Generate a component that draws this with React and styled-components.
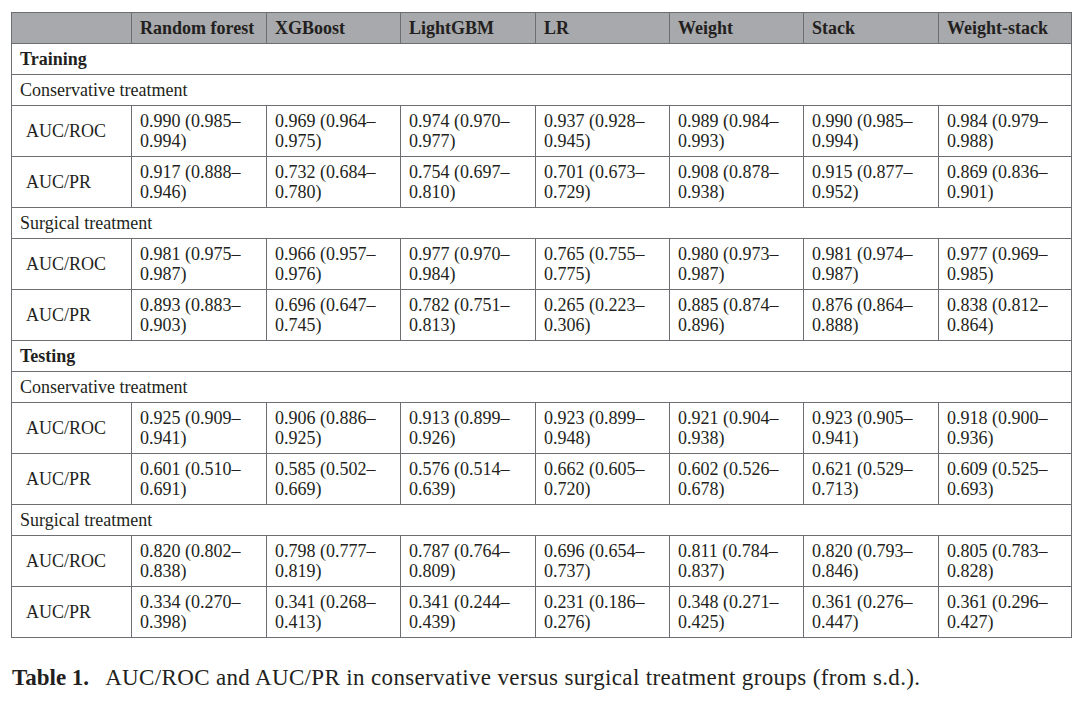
import React from 'react';
import styled, { createGlobalStyle } from 'styled-components';

const GlobalStyle = createGlobalStyle`
  body {
    margin: 0;
    background: #ffffff;
    color: #231f20;
    font-family: "Liberation Serif", "Times New Roman", serif;
  }
`;

const Page = styled.div`
  width: 1080px;
  height: 710px;
  padding: 12px 0 0 11px;
  box-sizing: border-box;
`;

const Table = styled.table`
  width: 1060px;
  border-collapse: collapse;
  table-layout: fixed;
  font-size: 18px;
  line-height: 20px;
`;

const HeadCell = styled.th`
  background: #a7a9ac;
  border: 1px solid #6d6e71;
  height: 30px;
  padding: 0 8px;
  text-align: left;
  font-weight: bold;
  white-space: nowrap;
`;

const SectionCell = styled.td`
  border: 1px solid #6d6e71;
  height: 30px;
  padding: 0 8px;
  font-weight: ${p => (p.$bold ? 'bold' : 'normal')};
`;

const LabelCell = styled.td`
  border: 1px solid #6d6e71;
  height: 50px;
  padding: 0 8px 0 14px;
`;

const ValueCell = styled.td`
  border: 1px solid #6d6e71;
  height: 50px;
  padding: 0 8px;
  vertical-align: middle;
`;

const Caption = styled.p`
  margin: 27px 0 0 1px;
  font-size: 23px;
  line-height: 26px;
  letter-spacing: 0.35px;
`;

const CaptionTitle = styled.span`
  font-weight: bold;
  letter-spacing: 0;
  margin-right: 16px;
`;

const models = ['Random forest', 'XGBoost', 'LightGBM', 'LR', 'Weight', 'Stack', 'Weight-stack'];
const widths = [120, 135, 134, 135, 134, 134, 135, 133];

const sections = [
  {
    title: 'Training',
    groups: [
      {
        name: 'Conservative treatment',
        rows: [
          ['AUC/ROC', ['0.990 (0.985–', '0.994)'], ['0.969 (0.964–', '0.975)'], ['0.974 (0.970–', '0.977)'], ['0.937 (0.928–', '0.945)'], ['0.989 (0.984–', '0.993)'], ['0.990 (0.985–', '0.994)'], ['0.984 (0.979–', '0.988)']],
          ['AUC/PR', ['0.917 (0.888–', '0.946)'], ['0.732 (0.684–', '0.780)'], ['0.754 (0.697–', '0.810)'], ['0.701 (0.673–', '0.729)'], ['0.908 (0.878–', '0.938)'], ['0.915 (0.877–', '0.952)'], ['0.869 (0.836–', '0.901)']],
        ],
      },
      {
        name: 'Surgical treatment',
        rows: [
          ['AUC/ROC', ['0.981 (0.975–', '0.987)'], ['0.966 (0.957–', '0.976)'], ['0.977 (0.970–', '0.984)'], ['0.765 (0.755–', '0.775)'], ['0.980 (0.973–', '0.987)'], ['0.981 (0.974–', '0.987)'], ['0.977 (0.969–', '0.985)']],
          ['AUC/PR', ['0.893 (0.883–', '0.903)'], ['0.696 (0.647–', '0.745)'], ['0.782 (0.751–', '0.813)'], ['0.265 (0.223–', '0.306)'], ['0.885 (0.874–', '0.896)'], ['0.876 (0.864–', '0.888)'], ['0.838 (0.812–', '0.864)']],
        ],
      },
    ],
  },
  {
    title: 'Testing',
    groups: [
      {
        name: 'Conservative treatment',
        rows: [
          ['AUC/ROC', ['0.925 (0.909–', '0.941)'], ['0.906 (0.886–', '0.925)'], ['0.913 (0.899–', '0.926)'], ['0.923 (0.899–', '0.948)'], ['0.921 (0.904–', '0.938)'], ['0.923 (0.905–', '0.941)'], ['0.918 (0.900–', '0.936)']],
          ['AUC/PR', ['0.601 (0.510–', '0.691)'], ['0.585 (0.502–', '0.669)'], ['0.576 (0.514–', '0.639)'], ['0.662 (0.605–', '0.720)'], ['0.602 (0.526–', '0.678)'], ['0.621 (0.529–', '0.713)'], ['0.609 (0.525–', '0.693)']],
        ],
      },
      {
        name: 'Surgical treatment',
        rows: [
          ['AUC/ROC', ['0.820 (0.802–', '0.838)'], ['0.798 (0.777–', '0.819)'], ['0.787 (0.764–', '0.809)'], ['0.696 (0.654–', '0.737)'], ['0.811 (0.784–', '0.837)'], ['0.820 (0.793–', '0.846)'], ['0.805 (0.783–', '0.828)']],
          ['AUC/PR', ['0.334 (0.270–', '0.398)'], ['0.341 (0.268–', '0.413)'], ['0.341 (0.244–', '0.439)'], ['0.231 (0.186–', '0.276)'], ['0.348 (0.271–', '0.425)'], ['0.361 (0.276–', '0.447)'], ['0.361 (0.296–', '0.427)']],
        ],
      },
    ],
  },
];

const App = () => {
  return (
    <Page>
      <GlobalStyle />
      <Table>
        <colgroup>
          {widths.map((w, i) => (<col key={i} style={{ width: w }} />))}
        </colgroup>
        <thead>
          <tr>
            <HeadCell />
            {models.map(m => (<HeadCell key={m}>{m}</HeadCell>))}
          </tr>
        </thead>
        <tbody>
          {sections.map(section => (
            <React.Fragment key={section.title}>
              <tr>
                <SectionCell $bold colSpan={8}>{section.title}</SectionCell>
              </tr>
              {section.groups.map(group => (
                <React.Fragment key={group.name}>
                  <tr>
                    <SectionCell colSpan={8}>{group.name}</SectionCell>
                  </tr>
                  {group.rows.map(([label, ...values]) => (
                    <tr key={label}>
                      <LabelCell>{label}</LabelCell>
                      {values.map((v, i) => (
                        <ValueCell key={i}>{v[0]}<br />{v[1]}</ValueCell>
                      ))}
                    </tr>
                  ))}
                </React.Fragment>
              ))}
            </React.Fragment>
          ))}
        </tbody>
      </Table>
      <Caption>
        <CaptionTitle>Table 1.</CaptionTitle>
        AUC/ROC and AUC/PR in conservative versus surgical treatment groups (from s.d.).
      </Caption>
    </Page>
  );
};

export default App;
